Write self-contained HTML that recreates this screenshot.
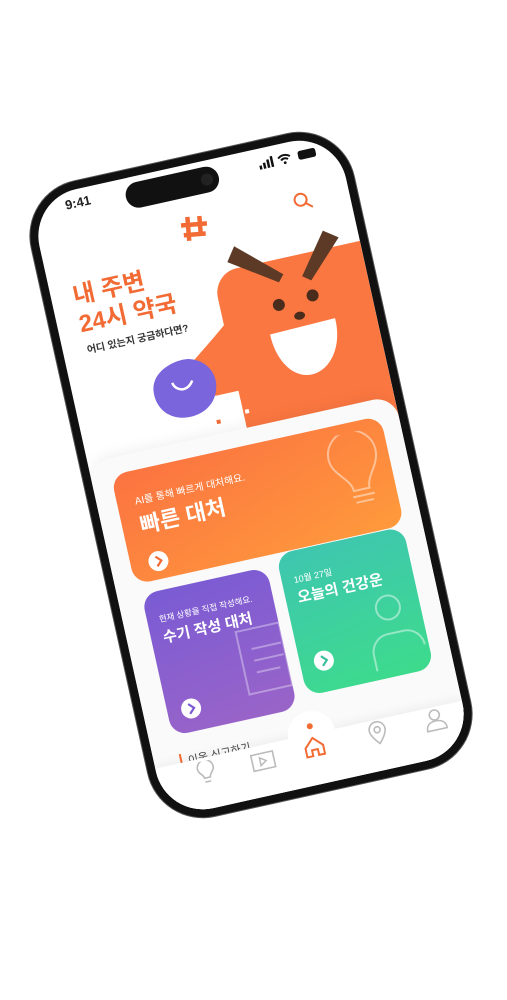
<!DOCTYPE html>
<html><head><meta charset="utf-8">
<style>
html,body{margin:0;padding:0;background:#fff;width:507px;height:1000px;overflow:hidden;font-family:"Liberation Sans","Noto Sans CJK KR",sans-serif}
.phone{position:absolute;left:86px;top:150px;width:330px;height:650px;transform:rotate(-12.5deg);transform-origin:165px 325px;background:#111;border-radius:56px;box-shadow:0 0 0 1px #555}
.screen{position:absolute;left:8px;top:8px;right:8px;bottom:8px;background:#fff;border-radius:48px;overflow:hidden}
.abs{position:absolute}
.card{position:absolute;border-radius:16px;color:#fff;overflow:hidden}
.arrow{position:absolute;width:20px;height:20px;border-radius:50%;background:#fff}
</style></head><body>
<div class="phone"><div class="screen">
  <!-- status -->
  <div class="abs" style="left:34px;top:6px;font-size:13px;font-weight:bold;color:#222">9:41</div>
  <div class="abs" style="left:95px;top:6px;width:95px;height:26px;border-radius:14px;background:#111"></div>
  <div class="abs" style="left:172px;top:13px;width:12px;height:12px;border-radius:50%;background:#222"></div>
  <svg class="abs" style="left:232px;top:8px" width="70" height="14" viewBox="0 0 70 14">
    <rect x="0" y="9" width="2.5" height="4" fill="#111"/><rect x="4" y="7" width="2.5" height="6" fill="#111"/><rect x="8" y="4.5" width="2.5" height="8.5" fill="#111"/><rect x="12" y="2" width="2.5" height="11" fill="#111"/>
    <path d="M20 6a9 9 0 0 1 12 0M22.5 8.5a5 5 0 0 1 7 0" stroke="#111" stroke-width="2" fill="none"/><circle cx="26" cy="11.5" r="1.4" fill="#111"/>
    <rect x="40" y="3" width="18" height="9" rx="2.5" fill="#111"/>
  </svg>
  <!-- search -->
  <svg class="abs" style="left:256px;top:50px" width="22" height="22" viewBox="0 0 22 22"><circle cx="9" cy="9" r="6" stroke="#f26b34" stroke-width="2" fill="none"/><path d="M13.5 13.5l6 5" stroke="#f26b34" stroke-width="2"/></svg>
  <!-- logo -->
  <svg class="abs" style="left:140px;top:50px" width="30" height="28" viewBox="0 0 30 28"><path d="M9 2v24M21 2v20M2 10h26M4 20h22" stroke="#f26b34" stroke-width="4.5" fill="none" transform="rotate(8 15 14)"/></svg>
  <!-- character -->
  <svg class="abs" style="left:0;top:0" width="314" height="320" viewBox="0 0 314 320">
    <path d="M190 112 H314 V300 H163 V240 L128 228 L100 212 L150 175 L163 165 V137 A25 25 0 0 1 190 112Z" fill="#fb7741"/>
    <rect x="125" y="232" width="38" height="70" fill="#fff"/>
    <polygon points="180,104 190,90 232,128 226,135" fill="#5c3a25"/>
    <polygon points="280,94 294,104 258,140 250,134" fill="#5c3a25"/>
    <circle cx="221" cy="157" r="6" fill="#4a2c1c"/>
    <circle cx="256" cy="155" r="6" fill="#4a2c1c"/>
    <ellipse cx="239" cy="172" rx="5.5" ry="4" fill="#4a2c1c"/>
    <path d="M206 184 L273 182 C274 210 258 232 238 232 C220 232 206 212 206 184Z" fill="#fff"/>
    <path d="M80 214 C82 196 104 188 120 190 C138 194 146 210 142 224 C138 240 124 248 108 247 C90 246 78 232 80 214Z" fill="#7a65dd"/>
    <path d="M100 210 C102 220 114 222 120 212" stroke="#fff" stroke-width="2.5" fill="none"/>
    <rect x="135" y="256" width="4" height="4" fill="#f26b34"/>
    <rect x="150" y="254" width="4" height="4" fill="#fff"/>
    <rect x="165" y="252" width="4" height="4" fill="#fff"/>
  </svg>
  <!-- headline -->
  <div class="abs" style="left:22px;top:90px;font-size:24px;font-weight:bold;line-height:29px;color:#f26b34">내 주변<br>24시 약국</div>
  <div class="abs" style="left:24px;top:151px;font-size:10px;font-weight:bold;color:#333">어디 있는지 궁금하다면?</div>
  <!-- panel -->
  <div class="abs" style="left:0;top:270px;width:314px;height:400px;background:#fafafa;border-radius:22px 22px 0 0;box-shadow:0 -4px 12px rgba(0,0,0,0.05)"></div>
  <div class="card" style="left:20px;top:287px;width:276px;height:112px;background:linear-gradient(160deg,#fb7341,#ff9a3c)">
    <div class="abs" style="left:18px;top:22px;font-size:10px">AI를 통해 빠르게 대처해요.</div>
    <div class="abs" style="left:18px;top:38px;font-size:22px;font-weight:bold">빠른 대처</div>
    <svg class="abs" style="left:212px;top:10px" width="60" height="80" viewBox="0 0 60 80"><path d="M22 58 C22 45 4 38 4 22 A24 24 0 0 1 52 22 C52 38 38 45 38 58Z M20 64h22 M22 70h18" stroke="rgba(255,255,255,0.45)" stroke-width="2" fill="none"/></svg>
    <div class="arrow" style="left:18px;top:84px"><svg width="20" height="20"><path d="M8 5l5 5-5 5" stroke="#f26b34" stroke-width="2.2" fill="none"/></svg></div>
  </div>
  <div class="card" style="left:24px;top:410px;width:128px;height:145px;background:linear-gradient(170deg,#7a5bd4,#9a64c8)">
    <div class="abs" style="left:12px;top:22px;font-size:8.5px;white-space:nowrap">현재 상황을 직접 작성해요.</div>
    <div class="abs" style="left:12px;top:36px;font-size:15px;font-weight:bold;white-space:nowrap">수기 작성 대처</div>
    <svg class="abs" style="left:82px;top:55px" width="50" height="70"><path d="M2 2h44v64H2Z M14 22h30 M14 34h30 M14 46h24" stroke="rgba(255,255,255,0.35)" stroke-width="2" fill="none"/></svg>
    <div class="arrow" style="left:14px;top:112px"><svg width="20" height="20"><path d="M8 5l5 5-5 5" stroke="#7a5bd4" stroke-width="2.2" fill="none"/></svg></div>
  </div>
  <div class="card" style="left:164px;top:400px;width:130px;height:145px;background:linear-gradient(170deg,#3fc6b0,#3ddb8c)">
    <div class="abs" style="left:12px;top:22px;font-size:9px">10월 27일</div>
    <div class="abs" style="left:12px;top:36px;font-size:15px;font-weight:bold;white-space:nowrap">오늘의 건강운</div>
    <svg class="abs" style="left:70px;top:60px" width="60" height="80"><circle cx="28" cy="16" r="12" stroke="rgba(255,255,255,0.45)" stroke-width="2" fill="none"/><path d="M4 76v-16a18 18 0 0 1 18-18h16a18 18 0 0 1 18 18" stroke="rgba(255,255,255,0.45)" stroke-width="2" fill="none"/></svg>
    <div class="arrow" style="left:14px;top:104px"><svg width="20" height="20"><path d="M8 5l5 5-5 5" stroke="#3bbf9c" stroke-width="2.2" fill="none"/></svg></div>
  </div>
  <div class="abs" style="left:26px;top:574px;font-size:11px;color:#444;border-left:2px solid #f26b34;padding-left:6px">이웃 신고하기</div>
  <!-- nav -->
  <div class="abs" style="left:0;top:583px;width:314px;height:60px;background:#fff;box-shadow:0 -3px 10px rgba(0,0,0,0.05)"></div>
  <div class="abs" style="left:136px;top:560px;width:48px;height:48px;border-radius:50%;background:#fff"></div>
  <div class="abs" style="left:157px;top:572px;width:6px;height:6px;border-radius:50%;background:#f26b34"></div>
  <svg class="abs" style="left:148px;top:584px" width="24" height="24"><path d="M3 12L12 3l9 9v9h-6v-6h-6v6H3Z" stroke="#f26b34" stroke-width="2" fill="none"/></svg>
  <svg class="abs" style="left:38px;top:586px" width="22" height="26"><path d="M8 17c0-4-5-5-5-10a8 8 0 0 1 16 0c0 5-5 6-5 10Zm0 4h6" stroke="#bbb" stroke-width="1.6" fill="none"/></svg>
  <svg class="abs" style="left:94px;top:588px" width="26" height="22"><rect x="2" y="3" width="22" height="16" stroke="#bbb" stroke-width="1.6" fill="none"/><path d="M10 7v8l6-4Z" stroke="#bbb" stroke-width="1.5" fill="none"/></svg>
  <svg class="abs" style="left:214px;top:583px" width="22" height="26"><path d="M11 24s-8-8-8-14a8 8 0 0 1 16 0c0 6-8 14-8 14Z" stroke="#bbb" stroke-width="1.6" fill="none"/><circle cx="11" cy="10" r="3" stroke="#bbb" stroke-width="1.6" fill="none"/></svg>
  <svg class="abs" style="left:272px;top:584px" width="24" height="24"><circle cx="12" cy="7" r="5" stroke="#bbb" stroke-width="1.6" fill="none"/><path d="M2 22c0-6 4-9 10-9s10 3 10 9Z" stroke="#bbb" stroke-width="1.6" fill="none"/></svg>
</div></div>
</body></html>
